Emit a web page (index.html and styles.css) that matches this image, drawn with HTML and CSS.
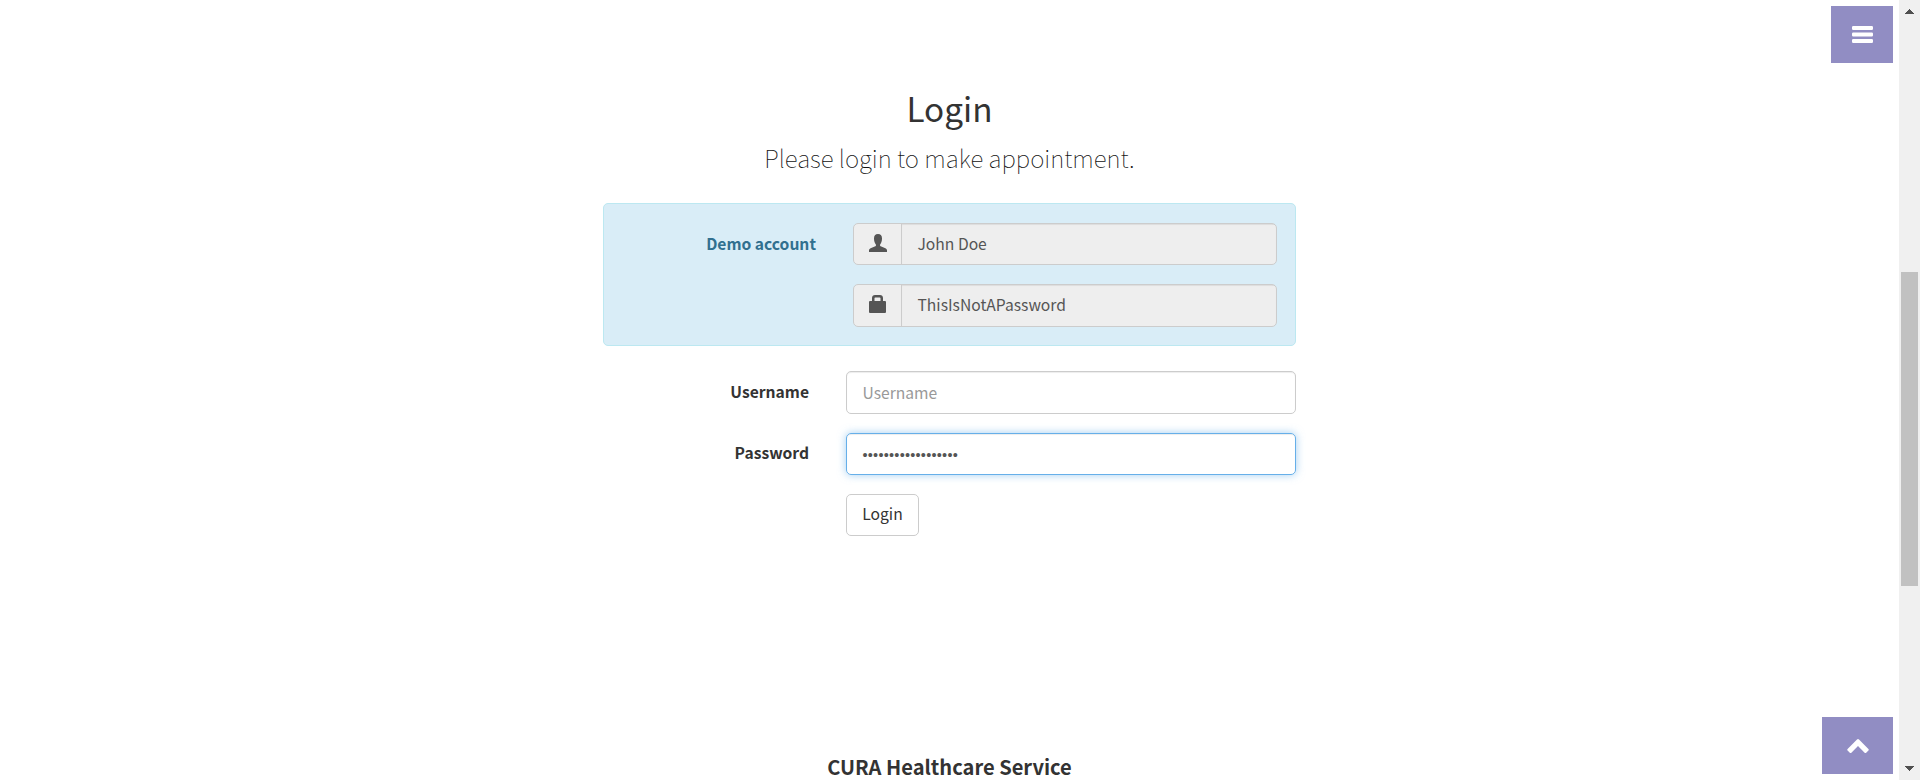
FILE: index.html
```html
<!DOCTYPE html>
<html lang="en">
<head>
<meta charset="utf-8">
<title>CURA Healthcare Service</title>
<link rel="stylesheet" href="styles.css">
</head>
<body>
<div class="page">
  <main class="login">
    <h2 class="title">Login</h2>
    <p class="lead">Please login to make appointment.</p>
    <form class="form">
      <div class="demo">
        <label class="label label-demo">Demo account</label>
        <div class="demo-fields">
          <div class="group">
            <span class="addon"><svg class="icon-user" viewBox="0 0 18 18"><path d="M9 0C6.200 0 5 1.700 5 4.500C5 7 5.600 9 6.900 10.400V12L1.600 14.300C.5 14.800 0 15.500 0 16.600V18H18V16.600C18 15.500 17.500 14.800 16.400 14.300L11.100 12V10.400C12.400 9 13 7 13 4.500C13 1.700 11.800 0 9 0Z"/></svg></span>
            <span class="value">John Doe</span>
          </div>
          <div class="group group-tall">
            <span class="addon"><svg class="icon-lock" viewBox="0 0 18 18"><path fill-rule="evenodd" d="M3 6V3C3 1.200 4.200 0 6 0H11C12.800 0 14 1.200 14 3V6H16Q17 6 17 7V17Q17 18 16 18H1Q0 18 0 17V7Q0 6 1 6ZM5.500 6H11.500V3.300Q11.500 2.500 10.700 2.500H6.300Q5.500 2.500 5.500 3.300Z"/></svg></span>
            <span class="value">ThisIsNotAPassword</span>
          </div>
        </div>
      </div>
      <div class="row row-user">
        <label class="label">Username</label>
        <div class="field field-tall"><span class="placeholder">Username</span></div>
      </div>
      <div class="row row-pass">
        <label class="label label-pass">Password</label>
        <div class="field focused"><span class="dots">••••••••••••••••••</span></div>
      </div>
      <div class="row row-submit"><span class="label"></span><button class="submit" type="button">Login</button></div>
    </form>
    <h4 class="brand">CURA Healthcare Service</h4>
  </main>
  <aside class="tools">
    <a class="tool menu"><svg class="icon-menu" viewBox="0 0 21 17"><path d="M0 1.200Q0 0 1.200 0H19.800Q21 0 21 1.200V2.800Q21 4 19.800 4H1.200Q0 4 0 2.800ZM0 7.700Q0 6.500 1.200 6.500H19.800Q21 6.500 21 7.700V9.300Q21 10.500 19.800 10.500H1.200Q0 10.500 0 9.300ZM0 14.200Q0 13 1.200 13H19.800Q21 13 21 14.200V15.800Q21 17 19.800 17H1.200Q0 17 0 15.800Z"/></svg></a>
    <a class="tool top"><svg class="icon-up" viewBox="0 0 22 15"><path d="M11 0Q11.500 0 12 .5L21.400 9.900Q22.200 10.700 21.400 11.500L19.200 13.700Q18.400 14.500 17.600 13.700L11 7.100L4.400 13.700Q3.600 14.500 2.800 13.700L.6 11.500Q-.2 10.700 .6 9.900L10 .5Q10.500 0 11 0Z"/></svg></a>
  </aside>
  <div class="scrollbar">
    <svg class="arrow" viewBox="0 0 9 5"><path d="M4 0H5V1H6V2H7V3H8V4H9V5H0V4H1V3H2V2H3V1H4Z"/></svg>
    <div class="thumb"></div>
    <svg class="arrow arrow-down" viewBox="0 0 9 5"><path d="M0 0H9V1H8V2H7V3H6V4H5V5H4V4H3V3H2V2H1V1H0Z"/></svg>
  </div>
</div>
</body>
</html>
```
FILE: styles.css
```css
* { box-sizing: border-box; }
body {
  margin: 0;
  overflow: hidden;
  background: #fff;
  color: #333;
  font-family: "Noto Sans CJK SC", "Noto Sans", sans-serif;
  font-size: 15.65px;
  line-height: 22px;
}
.page { display: grid; grid-template-columns: 603px 693px 1fr 21px; height: 780px; }
.login { grid-column: 2; height: 780px; padding-top: 84px; overflow: visible; }
.title { margin: 0; font-size: 33.3px; line-height: 48px; font-weight: 400; text-align: center; }
.lead { margin: 8px 0 27px; font-size: 24.15px; line-height: 36px; font-weight: 100; color: #111; text-align: center; }
.demo {
  display: flex;
  height: 143px;
  padding: 19px 18px 0 0;
  border: 1px solid #bce8f1;
  border-radius: 5px;
  background: #d9edf7;
  color: #31708f;
}
.label { width: 206px; margin-right: 37px; padding-top: 10px; font-weight: 700; text-align: right; white-space: nowrap; }
.label-demo { width: 212px; }
.label-pass { padding-top: 9px; }
.demo-fields { flex: 1; display: flex; flex-direction: column; gap: 19px; }
.group { display: flex; height: 42px; border: 1px solid #ccc; border-radius: 5px; background: #eee; color: #555; overflow: hidden; }
.group-tall { height: 43px; }
.addon { width: 48px; padding: 10px 0 0 15px; border-right: 1px solid #ccc; }
.addon svg { display: block; width: 18px; height: 18px; fill: #555; }
.value { flex: 1; padding: 9px 15.5px; box-shadow: inset 0 1px 1px rgba(0,0,0,.075); }
.row { display: flex; }
.row-user { margin-top: 25px; }
.row-pass { margin-top: 19px; }
.row-submit { margin-top: 19px; }
.field { width: 450px; height: 42px; padding: 10px 15.5px; border: 1px solid #ccc; border-radius: 5px; box-shadow: inset 0 1px 1px rgba(0,0,0,.075); color: #555; white-space: nowrap; }
.field-tall { height: 43px; }
.focused { border-color: #66afe9; box-shadow: inset 0 1px 1px rgba(0,0,0,.075), 0 0 9px rgba(102,175,233,.6); }
.placeholder { color: #999; }
.dots { display: block; font-family: "Liberation Sans", sans-serif; font-size: 14.5px; letter-spacing: 0.23px; line-height: 22px; }
.submit { width: 73px; height: 42px; padding: 0 0 2px; border: 1px solid #ccc; border-radius: 5px; background: #fff; color: #333; font: inherit; }
.brand { margin: 217px 0 0; font-size: 20.1px; line-height: 28px; text-align: center; font-weight: 700; }
.tools { display: flex; flex-direction: column; justify-content: space-between; align-items: flex-end; padding: 6px 6px 6px 0; }
.tool { display: flex; justify-content: center; height: 57px; background: #918dc3; }
.tool svg { fill: #fff; }
.menu { width: 62px; padding: 20px 0 0 1px; }
.icon-menu { width: 21px; height: 17px; }
.top { width: 71px; padding-top: 22px; }
.icon-up { width: 22px; height: 15px; }
.scrollbar { display: flex; flex-direction: column; padding: 9px 2px; background: #f0f0f0; }
.arrow { width: 9px; height: 5px; margin-left: 4px; fill: #505050; }
.thumb { width: 17px; height: 314px; margin-top: 258px; background: #c1c1c1; }
.arrow-down { margin-top: auto; }
```
